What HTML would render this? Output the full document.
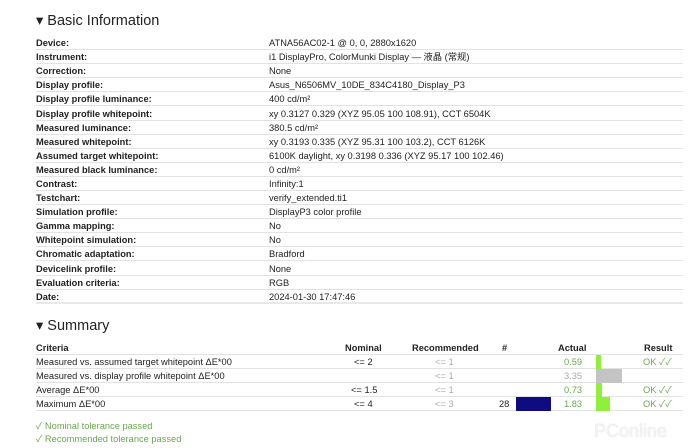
<!DOCTYPE html>
<html><head><meta charset="utf-8"><style>
*{margin:0;padding:0;box-sizing:border-box}
body{width:700px;height:448px;background:#fff;font-family:"Liberation Sans","Noto Sans CJK SC",sans-serif;color:#222;position:relative;overflow:hidden;font-size:9.3px;line-height:12px}
.a{position:absolute;white-space:nowrap;line-height:12px;height:12px}
h2{position:absolute;font-weight:normal;font-size:14.5px;line-height:18px;color:#222;left:36px}
.r{position:absolute;left:36px;width:647px;height:14px;border-bottom:1px solid #e2e2e2}
.r b,.r span{position:absolute;top:1px;line-height:12px;height:12px;white-space:nowrap}
.r b{left:0;font-weight:bold}
.r span{left:233px}
.g{color:#6aa84f}.lg{color:#aaa}
</style></head><body>
<h2 style="top:12px">▾ Basic Information</h2>
<div class="r" style="top:36px"><b>Device:</b><span>ATNA56AC02-1 @ 0, 0, 2880x1620</span></div>
<div class="r" style="top:50px"><b>Instrument:</b><span>i1 DisplayPro, ColorMunki Display — 液晶 (常规)</span></div>
<div class="r" style="top:64px"><b>Correction:</b><span>None</span></div>
<div class="r" style="top:78px"><b>Display profile:</b><span>Asus_N6506MV_10DE_834C4180_Display_P3</span></div>
<div class="r" style="top:92px"><b>Display profile luminance:</b><span>400 cd/m²</span></div>
<div class="r" style="top:107px"><b>Display profile whitepoint:</b><span>xy 0.3127 0.329 (XYZ 95.05 100 108.91), CCT 6504K</span></div>
<div class="r" style="top:121px"><b>Measured luminance:</b><span>380.5 cd/m²</span></div>
<div class="r" style="top:135px"><b>Measured whitepoint:</b><span>xy 0.3193 0.335 (XYZ 95.31 100 103.2), CCT 6126K</span></div>
<div class="r" style="top:149px"><b>Assumed target whitepoint:</b><span>6100K daylight, xy 0.3198 0.336 (XYZ 95.17 100 102.46)</span></div>
<div class="r" style="top:163px"><b>Measured black luminance:</b><span>0 cd/m²</span></div>
<div class="r" style="top:177px"><b>Contrast:</b><span>Infinity:1</span></div>
<div class="r" style="top:191px"><b>Testchart:</b><span>verify_extended.ti1</span></div>
<div class="r" style="top:205px"><b>Simulation profile:</b><span>DisplayP3 color profile</span></div>
<div class="r" style="top:219px"><b>Gamma mapping:</b><span>No</span></div>
<div class="r" style="top:233px"><b>Whitepoint simulation:</b><span>No</span></div>
<div class="r" style="top:247px"><b>Chromatic adaptation:</b><span>Bradford</span></div>
<div class="r" style="top:262px"><b>Devicelink profile:</b><span>None</span></div>
<div class="r" style="top:276px"><b>Evaluation criteria:</b><span>RGB</span></div>
<div class="r" style="top:290px;border-bottom:2px solid #e8e8e8"><b>Date:</b><span>2024-01-30 17:47:46</span></div>

<h2 style="top:317px">▾ Summary</h2>
<div class="r" style="top:341px"><b>Criteria</b></div>
<div class="a" style="left:345px;top:342px;font-weight:bold">Nominal</div>
<div class="a" style="left:412px;top:342px;font-weight:bold">Recommended</div>
<div class="a" style="left:502px;top:342px;font-weight:bold">#</div>
<div class="a" style="left:558px;top:342px;font-weight:bold">Actual</div>
<div class="a" style="left:644px;top:342px;font-weight:bold">Result</div>

<div class="r" style="top:355px"><span style="left:0">Measured vs. assumed target whitepoint ΔE*00</span></div>
<div class="r" style="top:369px"><span style="left:0">Measured vs. display profile whitepoint ΔE*00</span></div>
<div class="r" style="top:383px"><span style="left:0">Average ΔE*00</span></div>
<div class="r" style="top:397px"><span style="left:0">Maximum ΔE*00</span></div>

<div class="a" style="left:354px;top:356px">&lt;= 2</div>
<div class="a" style="left:351px;top:384px">&lt;= 1.5</div>
<div class="a" style="left:354px;top:398px">&lt;= 4</div>
<div class="a lg" style="left:435px;top:356px">&lt;= 1</div>
<div class="a lg" style="left:435px;top:370px">&lt;= 1</div>
<div class="a lg" style="left:435px;top:384px">&lt;= 1</div>
<div class="a lg" style="left:435px;top:398px">&lt;= 3</div>
<div class="a" style="left:499px;top:398px">28</div>
<div class="a" style="left:516px;top:397px;width:35px;height:14px;background:#100b80"></div>
<div class="a g" style="left:564px;top:356px">0.59</div>
<div class="a lg" style="left:564px;top:370px">3.35</div>
<div class="a g" style="left:564px;top:384px">0.73</div>
<div class="a g" style="left:564px;top:398px">1.83</div>
<div class="a" style="left:596px;top:355px;width:5px;height:14px;background:#8ef03a"></div>
<div class="a" style="left:596px;top:369px;width:26px;height:14px;background:#c4c4c4"></div>
<div class="a" style="left:596px;top:383px;width:6px;height:14px;background:#8ef03a"></div>
<div class="a" style="left:596px;top:397px;width:14px;height:14px;background:#8ef03a"></div>
<div class="a g" style="left:643px;top:356px">OK ✓✓</div>
<div class="a g" style="left:643px;top:384px">OK ✓✓</div>
<div class="a g" style="left:643px;top:398px">OK ✓✓</div>

<div class="a g" style="left:36px;top:420px">✓ Nominal tolerance passed</div>
<div class="a g" style="left:36px;top:433px">✓ Recommended tolerance passed</div>
<div class="a" style="left:594px;top:421px;font-size:18px;line-height:20px;height:20px;color:#f4f4f4;text-shadow:0 0 1px #ccc">PConline</div>
</body></html>
